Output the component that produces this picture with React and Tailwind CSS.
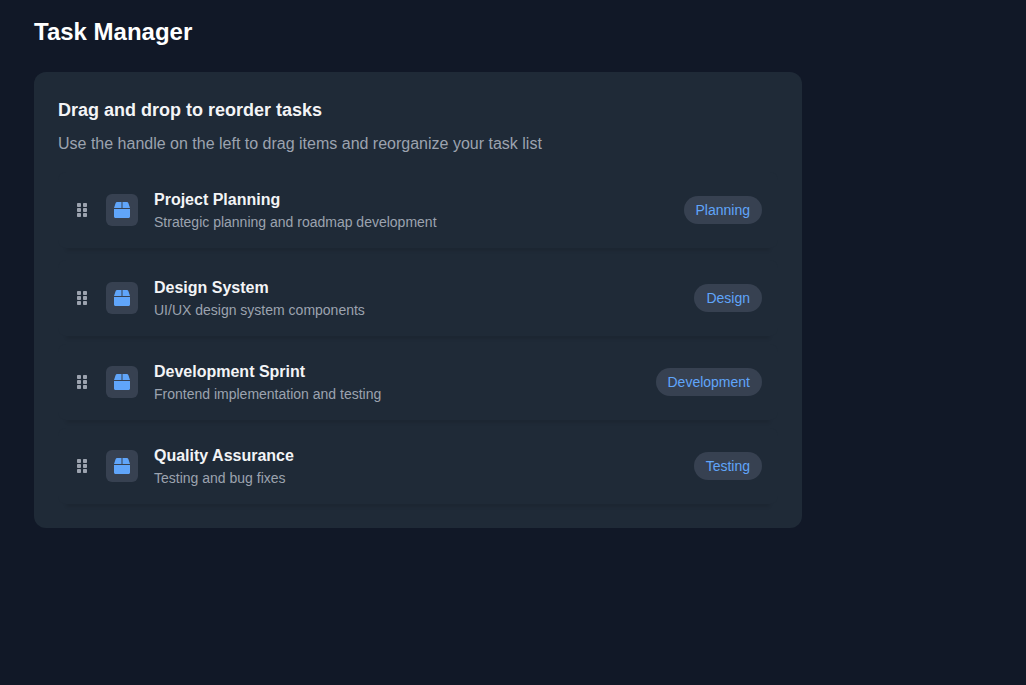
import { FaBox, FaGripVertical } from "react-icons/fa";

const tasks = [
  { title: "Project Planning", description: "Strategic planning and roadmap development", tag: "Planning" },
  { title: "Design System", description: "UI/UX design system components", tag: "Design" },
  { title: "Development Sprint", description: "Frontend implementation and testing", tag: "Development" },
  { title: "Quality Assurance", description: "Testing and bug fixes", tag: "Testing" },
];

function TaskRow({ title, description, tag }) {
  return (
    <li className="flex items-center gap-4 rounded-lg bg-[#1f2a37] p-4 shadow-[0_11px_3px_-8px_rgba(0,0,0,0.09)] first:mb-1">
      <button type="button" aria-label={`Reorder ${title}`} className="cursor-grab text-[#9ca3af]">
        <FaGripVertical className="size-4" />
      </button>
      <div className="flex size-8 shrink-0 items-center justify-center rounded-md bg-[#374151] text-[#60a5fa]">
        <FaBox className="size-4" />
      </div>
      <div className="min-w-0 flex-1">
        <h3 className="text-base font-semibold text-[#f3f4f6]">{title}</h3>
        <p className="text-sm text-[#9ca3af]">{description}</p>
      </div>
      <span className="rounded-full bg-[#374151] px-3 py-1 text-sm text-[#60a5fa]">{tag}</span>
    </li>
  );
}

export default function App() {
  return (
    <main className="min-h-screen bg-[#111827] px-[34px] py-4 font-['Liberation_Sans',Arial,sans-serif]">
      <h1 className="mb-6 text-2xl font-bold text-white">Task Manager</h1>
      <section className="max-w-3xl rounded-xl bg-[#1f2a37] p-6">
        <h2 className="mb-2 text-lg font-semibold text-[#f3f4f6]">Drag and drop to reorder tasks</h2>
        <p className="mb-4 text-base text-[#9ca3af]">
          Use the handle on the left to drag items and reorganize your task list
        </p>
        <ul className="flex flex-col gap-2">
          {tasks.map((task) => (
            <TaskRow key={task.title} {...task} />
          ))}
        </ul>
      </section>
    </main>
  );
}
